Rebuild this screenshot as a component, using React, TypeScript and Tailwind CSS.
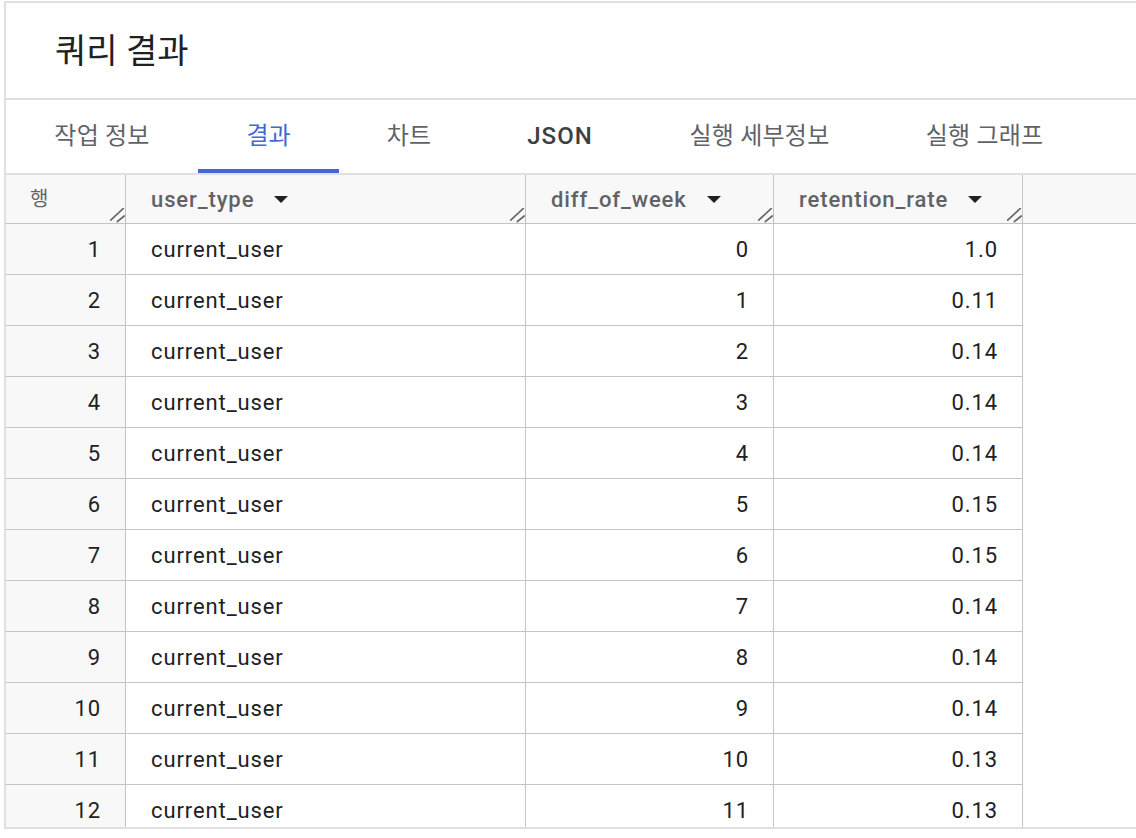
import React from 'react';

const rates = ['1.0', '0.11', '0.14', '0.14', '0.14', '0.15', '0.15', '0.14', '0.14', '0.14', '0.13', '0.13'];

const rows = rates.map((rate, i) => ({ n: i + 1, userType: 'current_user', diff: i, rate }));

const tabs = [
  { label: '작업 정보', w: 'w-[192px]' },
  { label: '결과', w: 'w-[141px]', active: true },
  { label: '차트', w: 'w-[140px]' },
  { label: 'JSON', w: 'w-[162px]', latin: true },
  { label: '실행 세부정보', w: 'w-[237px]' },
  { label: '실행 그래프', w: 'w-[213px]' },
];

function ResizeHandle() {
  return (
    <svg width="15" height="15" viewBox="0 0 15 15" className="absolute bottom-0 right-0" aria-hidden="true">
      <line x1="0.7" y1="12.2" x2="13.3" y2="0.5" stroke="#666" strokeWidth="1.7" strokeLinecap="round" />
      <line x1="7.3" y1="13.7" x2="14.2" y2="8" stroke="#666" strokeWidth="1.7" strokeLinecap="round" />
    </svg>
  );
}

function SortArrow() {
  return (
    <svg width="14" height="7" viewBox="0 0 14 7" className="ml-[20px] shrink-0" aria-hidden="true">
      <path d="M0 0h14L7 7z" fill="#202124" />
    </svg>
  );
}

function HeaderCell({ label, w, arrow = true }: { label: string; w: string; arrow?: boolean }) {
  return (
    <div className={`relative flex h-full shrink-0 items-center border-r border-[#c4c4c4] pl-[25px] ${w}`}>
      <span className="whitespace-nowrap text-[22px] font-medium tracking-[0.9px] text-[#5f6368]">{label}</span>
      {arrow && <SortArrow />}
      <ResizeHandle />
    </div>
  );
}

export default function App() {
  return (
    <div className="flex h-screen w-full flex-col overflow-hidden bg-white pb-[9px] pl-[4px] pt-[1px] font-[Roboto,'Noto_Sans_CJK_KR',sans-serif]">
      <div className="flex min-h-0 flex-1 flex-col border-l-2 border-t-2 border-[#e0e0e0]">
        <div className="flex h-[97px] shrink-0 items-center border-b-2 border-[#e0e0e0] pl-[49px]">
          <h1 className="text-[34px] font-normal leading-none text-[#202124]">쿼리 결과</h1>
        </div>

        <div className="flex h-[75px] shrink-0 border-b-2 border-[#e0e0e0]">
          {tabs.map((t) => (
            <div key={t.label} className={`flex shrink-0 flex-col ${t.w}`}>
              <div className="flex flex-1 items-center justify-center pt-[3px]">
                <span
                  className={
                    t.active
                      ? 'text-[24px] text-[#4169d3]'
                      : t.latin
                        ? 'text-[24px] font-medium tracking-[1px] text-[#3c4043]'
                        : 'text-[24px] tracking-[0.2px] text-[#5f6368]'
                  }
                >
                  {t.label}
                </span>
              </div>
              <div className={t.active ? 'h-[4px] bg-[#4169d3]' : 'h-[4px]'} />
            </div>
          ))}
        </div>

        <div className="flex min-h-0 flex-1 flex-col overflow-hidden border-b-2 border-[#e0e0e0]">
          <div className="flex h-[49px] shrink-0 border-b border-[#c4c4c4] bg-[#f8f8f8]">
            <div className="relative flex h-full w-[120px] shrink-0 items-center border-r border-[#c4c4c4] pl-[24px]">
              <span className="text-[20px] text-[#5f6368]">행</span>
              <ResizeHandle />
            </div>
            <HeaderCell label="user_type" w="w-[400px]" />
            <HeaderCell label="diff_of_week" w="w-[248px]" />
            <HeaderCell label="retention_rate" w="w-[249px]" />
            <div className="flex-1" />
          </div>

          {rows.map((r) => (
            <div key={r.n} className="flex h-[51px] w-[1017px] shrink-0 border-b border-[#c4c4c4] text-[22px] tracking-[0.9px] text-[#202124]">
              <div className="flex w-[120px] shrink-0 items-center justify-end border-r border-[#c4c4c4] bg-[#f8f8f8] pr-[24px]">
                {r.n}
              </div>
              <div className="flex w-[400px] shrink-0 items-center border-r border-[#c4c4c4] pl-[25px]">{r.userType}</div>
              <div className="flex w-[248px] shrink-0 items-center justify-end border-r border-[#c4c4c4] pr-[24px]">
                {r.diff}
              </div>
              <div className="flex w-[249px] shrink-0 items-center justify-end border-r border-[#c4c4c4] pr-[24px]">
                {r.rate}
              </div>
            </div>
          ))}
        </div>
      </div>
    </div>
  );
}
